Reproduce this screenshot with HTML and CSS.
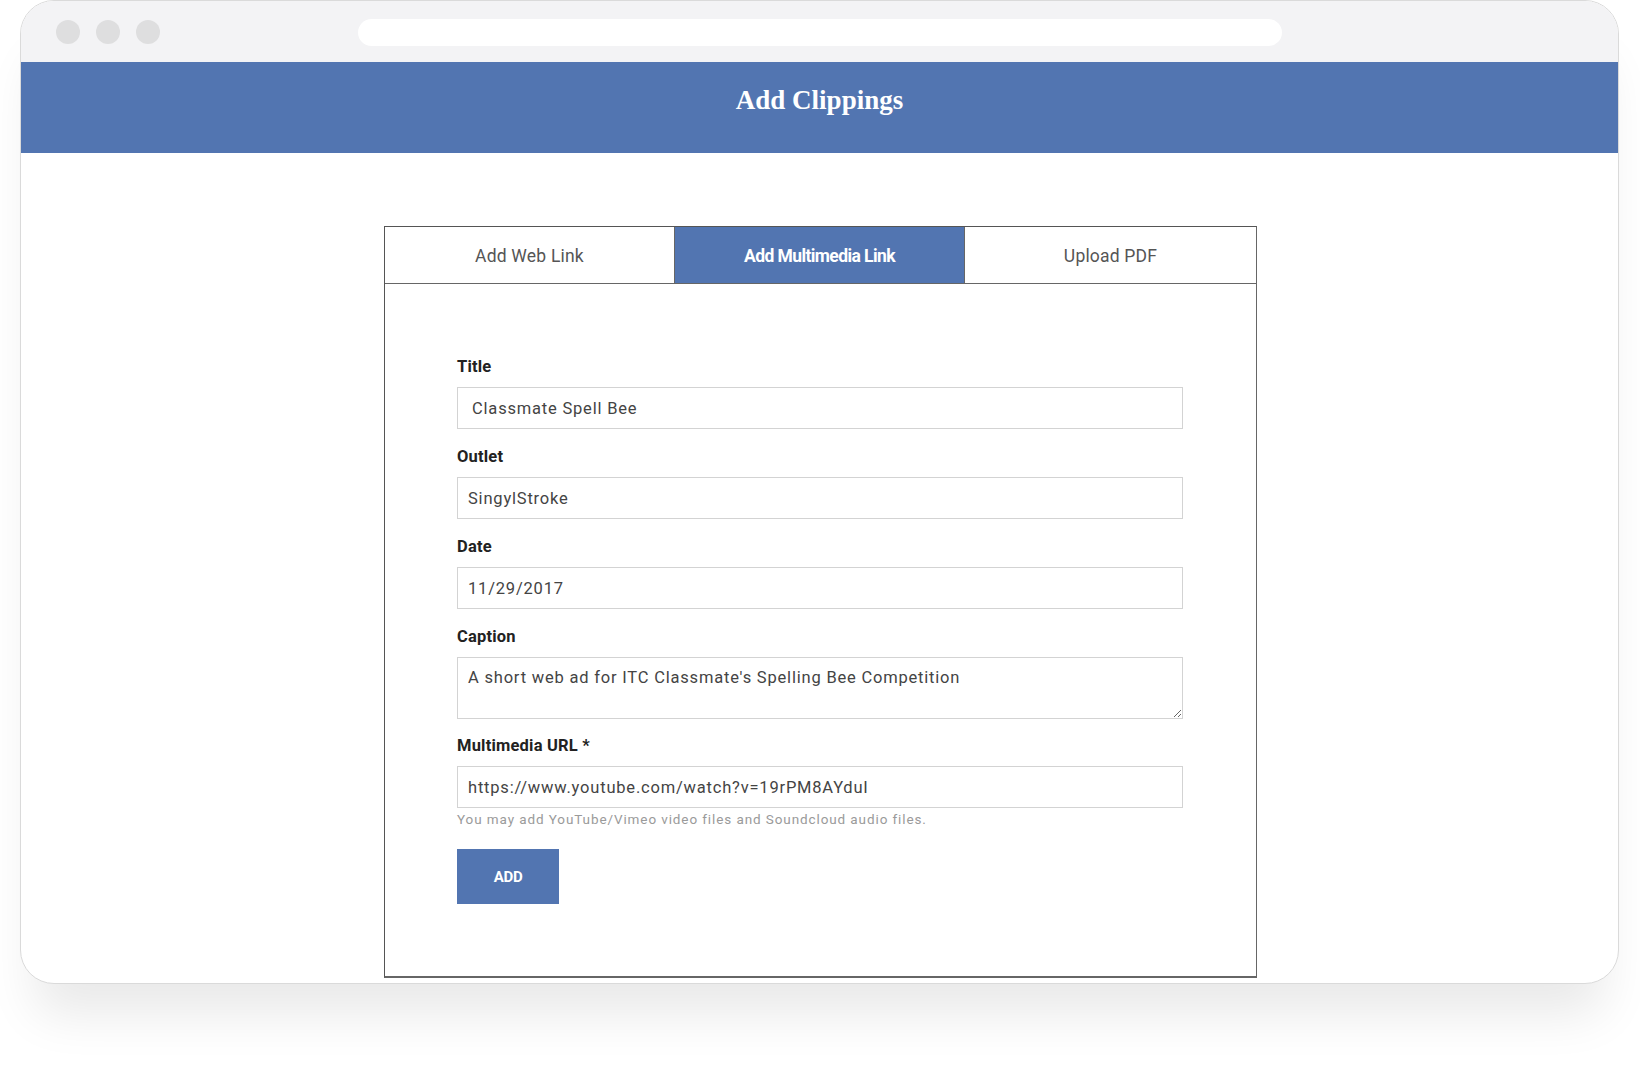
FILE: index.html
```html
<!DOCTYPE html>
<html lang="en">
<head>
<meta charset="utf-8">
<title>Add Clippings</title>
<link rel="stylesheet" href="styles.css">
</head>
<body>
<div class="page">
  <div class="window">
    <div class="chrome">
      <div class="dots"><span class="dot"></span><span class="dot"></span><span class="dot"></span></div>
      <div class="urlbar"></div>
    </div>
    <header class="header"><h1 class="header-title">Add Clippings</h1></header>
    <main class="content">
      <section class="panel">
        <nav class="tabs">
          <div class="tab">Add Web Link</div>
          <div class="tab tab-active">Add Multimedia Link</div>
          <div class="tab">Upload PDF</div>
        </nav>
        <form class="form">
          <div class="field">
            <label class="label">Title</label>
            <input class="input input-wide" type="text" value="Classmate Spell Bee">
          </div>
          <div class="field">
            <label class="label">Outlet</label>
            <input class="input" type="text" value="SingylStroke">
          </div>
          <div class="field">
            <label class="label">Date</label>
            <input class="input" type="text" value="11/29/2017">
          </div>
          <div class="field field-caption">
            <label class="label">Caption</label>
            <textarea class="input textarea">A short web ad for ITC Classmate's Spelling Bee Competition</textarea>
          </div>
          <div class="field field-last">
            <label class="label">Multimedia URL *</label>
            <input class="input" type="text" value="https://www.youtube.com/watch?v=19rPM8AYduI">
            <p class="help">You may add YouTube/Vimeo video files and Soundcloud audio files.</p>
          </div>
          <button class="btn" type="button">ADD</button>
        </form>
      </section>
    </main>
  </div>
</div>
</body>
</html>
```
FILE: styles.css
```css
* { box-sizing: border-box; }
html, body { margin: 0; padding: 0; background: #fff; }
body { font-family: Roboto, "Liberation Sans", sans-serif; color: #333; }

.page {
  width: 1640px;
  height: 1086px;
  padding: 0 21px 0 20px;
  overflow: hidden;
}

.window {
  width: 1599px;
  height: 984px;
  border: 1px solid #dadada;
  border-radius: 34px;
  background: #fff;
  overflow: hidden;
  box-shadow: 0 45px 50px -15px rgba(0, 0, 0, 0.09);
}

.chrome {
  height: 61px;
  background: #f3f3f5;
  display: flex;
  align-items: center;
  padding: 0 0 0 35px;
}
.dots { display: flex; gap: 16px; margin-top: 1px; }
.dot {
  width: 24px;
  height: 24px;
  border-radius: 50%;
  background: #dededf;
}
.urlbar {
  margin-left: 198px;
  width: 924px;
  height: 27px;
  border-radius: 14px;
  background: #fff;
  margin-top: 1px;
}

.header {
  height: 91px;
  background: #5275b1;
  display: flex;
  align-items: center;
  justify-content: center;
}
.header-title {
  margin: 0;
  font-family: "Liberation Serif", "Times New Roman", serif;
  font-weight: bold;
  font-size: 27px;
  color: #fff;
  padding-bottom: 14px;
}

.content {
  display: flex;
  justify-content: center;
  padding-top: 73px;
  padding-left: 2px;
}

.panel {
  width: 873px;
  height: 752px;
  border: 1px solid #555;
  border-bottom-width: 2px;
  border-bottom-color: #666;
  border-right-color: #666;
}

.tabs {
  display: grid;
  grid-template-columns: 289px 291px 1fr;
  height: 57px;
  border-bottom: 1px solid #666;
}
.tab {
  display: flex;
  align-items: center;
  justify-content: center;
  font-size: 17.5px;
  color: #555;
  letter-spacing: 0.2px;
  padding-top: 1px;
}
.tab-active {
  background: #5275b1;
  color: #fff;
  font-weight: bold;
  letter-spacing: -0.6px;
  border-left: 1px solid #666;
  border-right: 1px solid #666;
}

.form {
  padding: 73px 72px 0 72px;
  display: flex;
  flex-direction: column;
}
.field { display: flex; flex-direction: column; margin-bottom: 18px; }
.field-caption { margin-bottom: 17px; }
.field-last { margin-bottom: 0; }
.label {
  font-size: 16.5px;
  font-weight: bold;
  line-height: 20px;
  color: #222;
  margin-bottom: 10px;
  letter-spacing: 0.2px;
}
.input {
  width: 726px;
  height: 42px;
  border: 1px solid #d3d3d3;
  border-radius: 0;
  padding: 0 10px;
  font-family: Roboto, "Liberation Sans", sans-serif;
  font-size: 16.5px;
  color: #444;
  letter-spacing: 0.8px;
  background: #fff;
  outline: none;
}
.input-wide { padding-left: 14px; }
.textarea {
  height: 62px;
  padding: 9px 10px;
  resize: vertical;
  line-height: 22px;
}
.help {
  margin: 2px 0 0;
  font-size: 13.5px;
  line-height: 18px;
  color: #9a9a9a;
  letter-spacing: 0.9px;
}
.btn {
  margin-top: 21px;
  width: 102px;
  height: 55px;
  border: none;
  background: #5275b1;
  color: #fff;
  font-family: Roboto, "Liberation Sans", sans-serif;
  font-weight: bold;
  font-size: 15px;
  letter-spacing: -0.3px;
  padding: 0;
}
```
